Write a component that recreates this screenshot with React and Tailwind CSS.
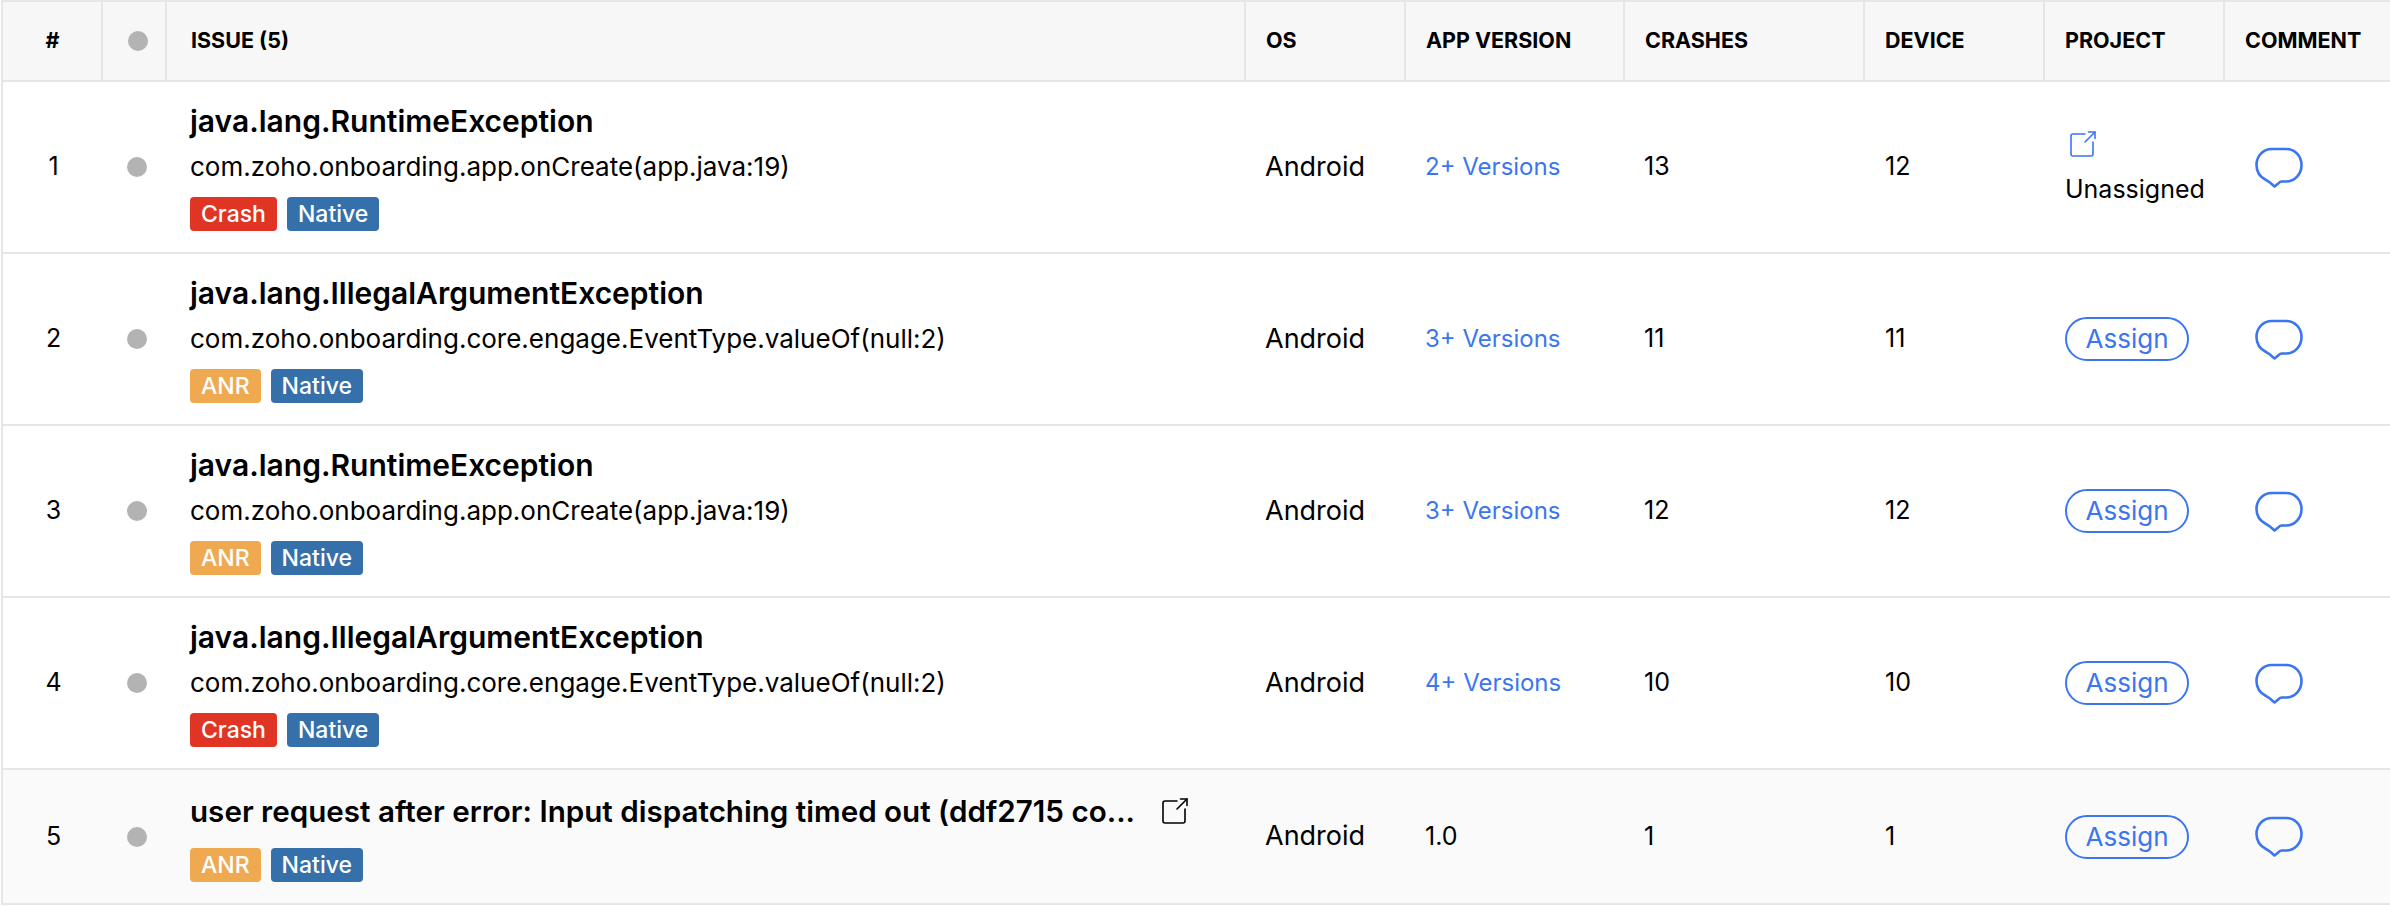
import React from "react";

const issues = [
  { id: 1, title: "java.lang.RuntimeException", sub: "com.zoho.onboarding.app.onCreate(app.java:19)", type: "Crash", version: "2+ Versions", crashes: 13, devices: 12, unassigned: true },
  { id: 2, title: "java.lang.IllegalArgumentException", sub: "com.zoho.onboarding.core.engage.EventType.valueOf(null:2)", type: "ANR", version: "3+ Versions", crashes: 11, devices: 11 },
  { id: 3, title: "java.lang.RuntimeException", sub: "com.zoho.onboarding.app.onCreate(app.java:19)", type: "ANR", version: "3+ Versions", crashes: 12, devices: 12 },
  { id: 4, title: "java.lang.IllegalArgumentException", sub: "com.zoho.onboarding.core.engage.EventType.valueOf(null:2)", type: "Crash", version: "4+ Versions", crashes: 10, devices: 10 },
  { id: 5, title: "user request after error: Input dispatching timed out (ddf2715 co...", type: "ANR", version: "1.0", crashes: 1, devices: 1, plain: true },
];

const ExternalIcon = ({ className }) => (
  <svg viewBox="0 0 26 26" fill="none" stroke="currentColor" strokeWidth="1.6" strokeLinecap="round" strokeLinejoin="round" className={className}>
    <path d="M15 3H3a2 2 0 0 0-2 2v18a2 2 0 0 0 2 2h18a2 2 0 0 0 2-2V11" />
    <path d="M15 11 25 1" />
    <path d="M18.500 1H25v6.500" />
  </svg>
);

const CommentIcon = () => (
  <svg viewBox="0 0 48 41" fill="none" stroke="currentColor" strokeWidth="2.6" strokeLinejoin="round" className="w-[48px] h-[41px] text-[#3b76f0]">
    <path d="M17 2h14c9 0 15.500 7 15.500 16S40 34.500 31 34.500h-4.500c-1.500 0-2.500 1-3.500 2.200L19.500 39.500l-4-3.500c-1.500-1-2.500-2-4.500-3C5 30 1.500 24.500 1.500 18 1.500 9 8 2 17 2Z" />
  </svg>
);

const Badge = ({ label }) => {
  const colors = { Crash: "bg-[#e03525]", ANR: "bg-[#efa951]", Native: "bg-[#3570ab]" };
  return (
    <span className={`${colors[label]} h-[34px] px-[11px] rounded-[4px] text-white text-[23px] leading-[34px] font-medium`}>
      {label}
    </span>
  );
};

const Dot = () => <div className="w-[20px] h-[20px] rounded-full bg-[#b3b3b3] ml-[25px]" />;

const headers = ["ISSUE (5)", "OS", "APP VERSION", "CRASHES", "DEVICE", "PROJECT", "COMMENT"];

export default function App() {
  return (
    <div className="w-[2390px] h-[906px] bg-white text-black overflow-hidden font-['Inter','Noto_Sans',sans-serif]">
      <table className="table-fixed border-collapse w-[2390px] ml-[1px]">
        <colgroup>
          <col className="w-[100px]" />
          <col className="w-[64px]" />
          <col className="w-[1079px]" />
          <col className="w-[160px]" />
          <col className="w-[219px]" />
          <col className="w-[240px]" />
          <col className="w-[180px]" />
          <col className="w-[180px]" />
          <col className="w-[168px]" />
        </colgroup>
        <thead>
          <tr className="h-[80px] bg-[#f7f7f7] border-t-2 border-b-2 border-[#e6e6e6]">
            <th className="border-l-2 border-[#e6e6e6] text-[21.500px] font-bold text-center pl-[1px] pb-[1px]">#</th>
            <th className="border-l-2 border-[#e6e6e6]"><Dot /></th>
            {headers.map((h, i) => (
              <th
                key={h}
                className={`border-l-2 border-[#e6e6e6] text-[21.500px] font-bold text-left whitespace-nowrap pb-[1px] ${i === 0 ? "pl-[24px]" : "pl-[20px]"}`}
              >
                {h}
              </th>
            ))}
          </tr>
        </thead>
        <tbody>
          {issues.map((row) => (
            <tr
              key={row.id}
              className={`border-b-2 border-[#e6e6e6] text-[25px] ${row.plain ? "h-[135px] bg-[#fafafa]" : "h-[172px]"}`}
            >
              <td className="border-l-2 border-[#e6e6e6] text-center pl-[2px]">{row.id}</td>
              <td><Dot /></td>
              <td className="pl-[24px]">
                {row.plain ? (
                  <div className="flex items-center gap-[27px] text-[29.600px] font-semibold leading-[38px] mb-[18px] whitespace-nowrap">
                    <span>{row.title}</span>
                    <ExternalIcon className="w-[26px] h-[26px]" />
                  </div>
                ) : (
                  <>
                    <div className="text-[30px] font-semibold leading-[37px]">{row.title}</div>
                    <div className="text-[26px] leading-[40px] mt-[7px] mb-[10px]">{row.sub}</div>
                  </>
                )}
                <div className="flex gap-[10px]">
                  <Badge label={row.type} />
                  <Badge label="Native" />
                </div>
              </td>
              <td className="pl-[20px] text-[27px]">Android</td>
              <td className={`pl-[20px] ${row.plain ? "" : "text-[24px] text-[#3b76f0]"}`}>{row.version}</td>
              <td className="pl-[20px]">{row.crashes}</td>
              <td className="pl-[21px]">{row.devices}</td>
              <td className="pl-[21px]">
                {row.unassigned ? (
                  <div className="pt-[4px]">
                    <ExternalIcon className="w-[26px] h-[26px] text-[#3b76f0] ml-[5px] mb-[14px]" />
                    <div className="leading-[36px]">Unassigned</div>
                  </div>
                ) : (
                  <button className="w-[124px] h-[44px] border-2 border-[#3b76f0] rounded-full text-[#3b76f0] text-[26px] leading-none">
                    Assign
                  </button>
                )}
              </td>
              <td className="pl-[31px]"><CommentIcon /></td>
            </tr>
          ))}
        </tbody>
      </table>
    </div>
  );
}
